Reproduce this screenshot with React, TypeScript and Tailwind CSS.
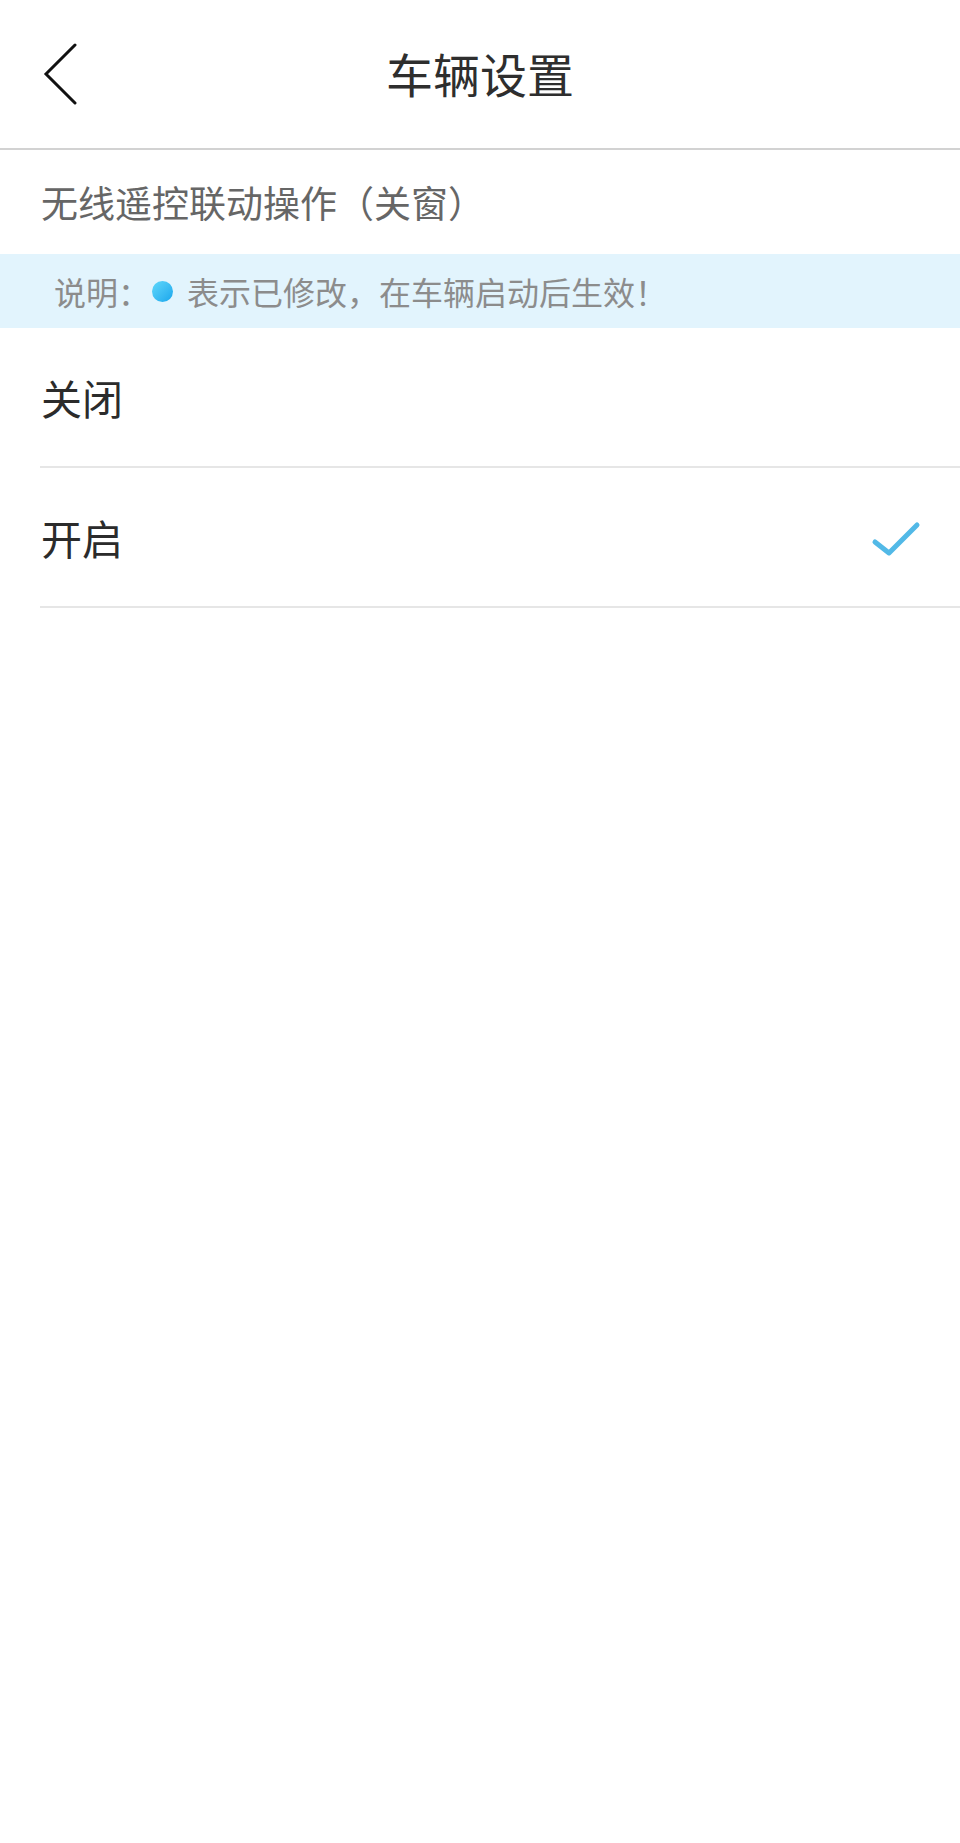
import React from "react";

const font = { fontFamily: '"Noto Sans CJK SC", "Noto Sans", sans-serif' };

function BackArrow() {
  return (
    <svg width="40" height="62" viewBox="0 0 40 62" fill="none">
      <path d="M35 2 L6 31 L35 60" stroke="#111" strokeWidth="3" strokeLinecap="round" strokeLinejoin="miter" />
    </svg>
  );
}

function Check() {
  return (
    <svg width="52" height="40" viewBox="0 0 52 40" fill="none">
      <path d="M5 21 L19 32 L47 4" stroke="#52b9e7" strokeWidth="5" strokeLinecap="round" strokeLinejoin="round" />
    </svg>
  );
}

const options = [
  { label: "关闭", selected: false },
  { label: "开启", selected: true },
];

export default function App() {
  return (
    <div className="min-h-[1843px] w-[960px] bg-white" style={font}>
      <header className="relative flex h-[150px] items-center justify-center border-b-2 border-[#d2d2d2]">
        <div className="absolute left-[40px] top-[43px]">
          <BackArrow />
        </div>
        <h1 className="pb-[4px] text-[47px] leading-none font-normal text-[#2e2e2e]">车辆设置</h1>
      </header>

      <div className="flex h-[104px] items-center pl-[41px] text-[37px] leading-none text-[#666666]">
        无线遥控联动操作（关窗）
      </div>

      <div className="flex h-[74px] items-center bg-[#e2f4fd] pl-[54px] text-[32px] leading-none text-[#8c8c8c]">
        <span>说明：</span>
        <span className="ml-[2px] mr-[14px] inline-block h-[21px] w-[21px] rounded-full bg-gradient-to-br from-[#5fd8fb] to-[#12a6ec]" />
        <span>表示已修改，在车辆启动后生效！</span>
      </div>

      <ul>
        {options.map((o) => (
          <li key={o.label} className="ml-[40px] flex h-[140px] items-center justify-between border-b-2 border-[#e6e6e6] pr-[38px]">
            <span className="pl-[1px] text-[41px] leading-none text-[#2b2b2b]">{o.label}</span>
            {o.selected && (
              <span className="mt-[8px]">
                <Check />
              </span>
            )}
          </li>
        ))}
      </ul>
    </div>
  );
}
